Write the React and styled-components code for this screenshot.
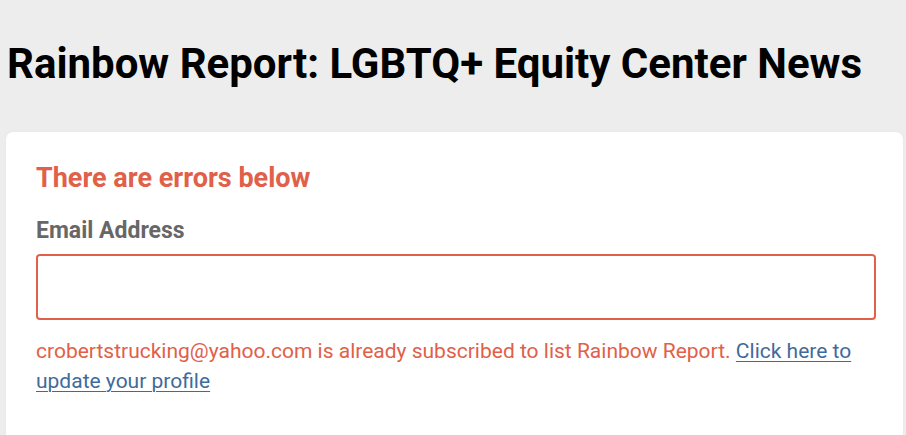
import React from 'react';
import styled, { createGlobalStyle } from 'styled-components';

const GlobalStyle = createGlobalStyle`
  html, body {
    margin: 0;
    padding: 0;
    background-color: #ededed;
    font-family: Roboto, "Liberation Sans", Arial, sans-serif;
  }
`;

const Page = styled.div`
  padding: 0 3px 0 6px;
  height: 435px;
  overflow: hidden;
`;

const Title = styled.h1`
  margin: 0;
  padding: 40px 0 0 1px;
  height: 132px;
  box-sizing: border-box;
  font-size: 42px;
  font-weight: 700;
  color: #000;
  line-height: 48px;
`;

const Card = styled.div`
  background-color: #fff;
  border-radius: 7px;
  padding: 30px 27px 120px 30px;
  box-shadow: 0 0 3px rgba(0, 0, 0, 0.04);
`;

const ErrorHeading = styled.h2`
  margin: 0 0 24px;
  font-size: 27px;
  line-height: 32px;
  font-weight: 700;
  color: #e0604a;
`;

const Label = styled.label`
  display: block;
  margin-bottom: 10px;
  font-size: 23px;
  line-height: 26px;
  font-weight: 700;
  color: #676767;
`;

const Input = styled.input`
  display: block;
  width: 100%;
  height: 66px;
  box-sizing: border-box;
  border: 2px solid ${(p) => (p.$error ? '#e0604a' : '#ccc')};
  border-radius: 4px;
  padding: 0 14px;
  font-size: 20px;
  font-family: inherit;
  outline: none;
`;

const ErrorText = styled.p`
  margin: 16px 0 0;
  font-size: 21px;
  line-height: 30px;
  color: #e0604a;
`;

const Link = styled.a`
  color: #3f6b9c;
  text-decoration: underline;
  text-underline-offset: 3px;
  text-decoration-thickness: 1px;
`;

export default function App() {
  return (
    <>
      <GlobalStyle />
      <Page>
        <Title>Rainbow Report: LGBTQ+ Equity Center News</Title>
        <Card>
          <ErrorHeading>There are errors below</ErrorHeading>
          <Label htmlFor="email">Email Address</Label>
          <Input id="email" type="email" $error />
          <ErrorText>
            crobertstrucking@yahoo.com is already subscribed to list Rainbow Report.{' '}
            <Link href="#">Click here to update your profile</Link>
          </ErrorText>
        </Card>
      </Page>
    </>
  );
}
